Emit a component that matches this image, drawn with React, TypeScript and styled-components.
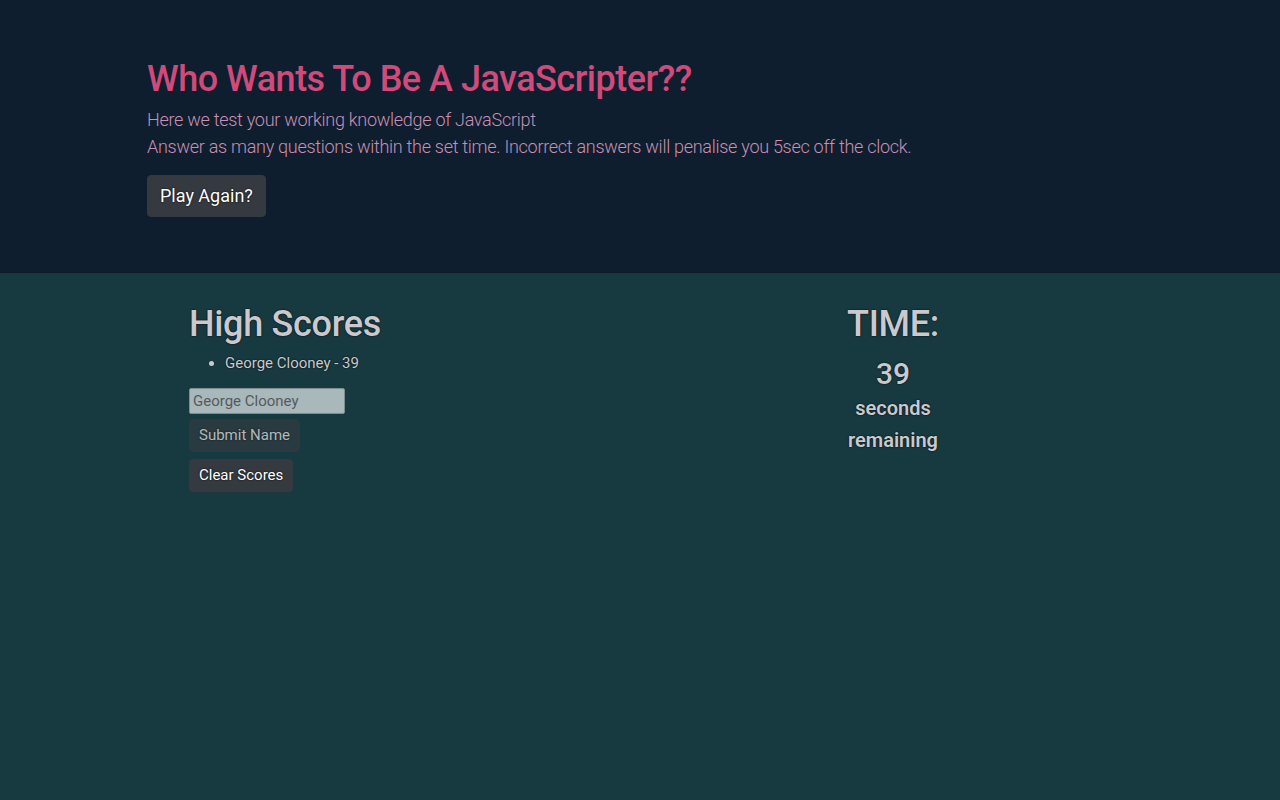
import React from "react";
import styled, { createGlobalStyle } from "styled-components";

const Global = createGlobalStyle`
  html, body { margin: 0; padding: 0; }
  body {
    background: #173a40;
    font-family: Roboto, "Noto Sans", "Liberation Sans", sans-serif;
    min-height: 800px;
  }
  * { box-sizing: border-box; }
`;

const Hero = styled.header`
  background: #0f1e2e;
  height: 273px;
  padding: 58px 0 0 147px;
  border-bottom: 1px solid #0d1a26;
`;

const Title = styled.h1`
  margin: 0 0 5px;
  font-size: 36px;
  font-weight: 500;
  letter-spacing: -0.5px;
  line-height: 43px;
  color: #d04a7a;
`;

const Lead = styled.p`
  margin: 0;
  font-size: 18px;
  font-weight: 300;
  letter-spacing: -0.28px;
  line-height: 27px;
  color: #c990b3;
`;

const DarkButton = styled.button<{ $size?: "lg" | "sm"; $disabled?: boolean }>`
  display: inline-block;
  background: #343a40;
  color: #fff;
  border: 1px solid #343a40;
  border-radius: 4px;
  font-family: inherit;
  font-size: ${(p) => (p.$size === "lg" ? "18px" : "15px")};
  padding: ${(p) => (p.$size === "lg" ? "7px 12px" : "5px 9px")};
  line-height: ${(p) => (p.$size === "lg" ? "26px" : "21px")};
  text-shadow: 0 0 2px #000;
  opacity: ${(p) => (p.$disabled ? 0.65 : 1)};
  cursor: pointer;
`;

const PlayButton = styled(DarkButton)`
  margin-top: 15px;
`;

const Main = styled.main`
  display: flex;
  padding: 30px 0 0 189px;
`;

const ScoresCol = styled.section`
  width: 554px;
  display: flex;
  flex-direction: column;
  align-items: flex-start;
`;

const TimerCol = styled.section`
  width: 300px;
  display: flex;
  flex-direction: column;
  align-items: center;
  color: #c9c9ce;
  text-shadow: 0 0 2px #000;
`;

const SectionHeading = styled.h2`
  margin: 0;
  font-size: 36px;
  font-weight: 500;
  letter-spacing: -0.3px;
  line-height: 1.2;
  color: #c9c9ce;
  text-shadow: 0 0 2px #000;
`;

const ScoreList = styled.ul`
  margin: 6px 0 14px;
  padding-left: 36px;
  color: #c9c9ce;
  font-size: 15px;
  line-height: 22px;
  text-shadow: 0 0 2px #000;
`;

const NameInput = styled.input`
  width: 156px;
  height: 26px;
  background: #a9b8ba;
  border: 1px solid #7d8c8f;
  border-radius: 2px;
  font-family: inherit;
  font-size: 15px;
  color: #4a4f52;
  padding: 1px 3px;
  margin-bottom: 5px;
  &::placeholder { color: #555b5e; }
`;

const StackButton = styled(DarkButton)`
  margin-bottom: 7px;
`;

const Count = styled.div`
  font-size: 30px;
  font-weight: 500;
  line-height: 1.2;
  margin-top: 10px;
`;

const Unit = styled.div`
  font-size: 20px;
  font-weight: 600;
  line-height: 32px;
  &:first-of-type { margin-top: 3px; }
`;

export default function App() {
  return (
    <>
      <Global />
      <Hero>
        <Title>Who Wants To Be A JavaScripter??</Title>
        <Lead>Here we test your working knowledge of JavaScript</Lead>
        <Lead>
          Answer as many questions within the set time. Incorrect answers will penalise you 5sec off the clock.
        </Lead>
        <PlayButton $size="lg">Play Again?</PlayButton>
      </Hero>
      <Main>
        <ScoresCol>
          <SectionHeading>High Scores</SectionHeading>
          <ScoreList>
            <li>George Clooney - 39</li>
          </ScoreList>
          <NameInput placeholder="George Clooney" />
          <StackButton $disabled>Submit Name</StackButton>
          <StackButton>Clear Scores</StackButton>
        </ScoresCol>
        <TimerCol>
          <SectionHeading>TIME:</SectionHeading>
          <Count>39</Count>
          <Unit>seconds</Unit>
          <Unit>remaining</Unit>
        </TimerCol>
      </Main>
    </>
  );
}
